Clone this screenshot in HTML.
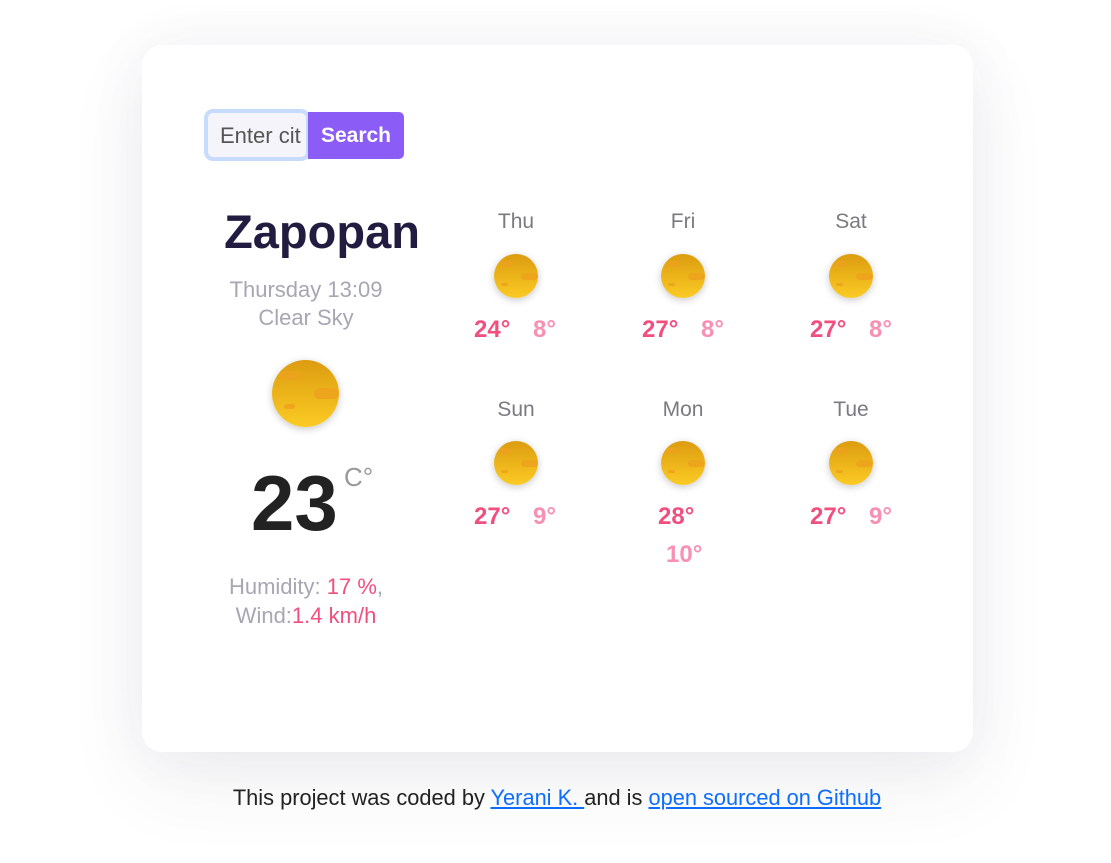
<!DOCTYPE html>
<html><head><meta charset="utf-8"><style>
*{margin:0;padding:0;box-sizing:border-box}
body{width:1111px;height:863px;background:#fff;font-family:"Liberation Sans",sans-serif;position:relative;overflow:hidden}
.card{position:absolute;left:142px;top:45px;width:831px;height:707px;background:#fff;border-radius:20px;box-shadow:0 30px 80px rgba(60,60,90,0.08),0 0 60px rgba(60,60,90,0.05)}
.a{position:absolute;white-space:nowrap}
.c{transform:translateX(-50%)}
.sun{position:absolute;border-radius:50%;background:linear-gradient(180deg,#dc9c10,#fbcb24);box-shadow:0 2px 8px rgba(0,0,0,0.22);overflow:hidden}
.sun i{position:absolute;background:#eda21d;border-radius:6px;opacity:.85}
.day{font-size:21px;color:#7a7a80}
.hi{font-size:24px;font-weight:bold;color:#f04f7f}
.lo{font-size:24px;font-weight:bold;color:#f890b2}
a{color:#0d6efd}
</style></head><body>
<div class="card"></div>
<div class="a" style="left:204px;top:109px;width:106px;height:52px;border:4px solid #c7dcfc;border-radius:9px;background:#f5f4fb;font-size:22px;color:#555;padding:10px 0 0 12px;overflow:hidden">Enter cit</div>
<div class="a" style="left:308px;top:112px;width:96px;height:47px;background:#8b5cf6;border-radius:0 5px 5px 0;color:#fff;font-weight:bold;font-size:21px;text-align:center;line-height:47px">Search</div>

<div class="a c" style="left:322px;top:204px;font-size:47px;font-weight:bold;color:#221d40">Zapopan</div>
<div class="a c" style="left:306px;top:276px;font-size:22px;color:#a8a6b3;text-align:center;line-height:28px">Thursday 13:09<br>Clear Sky</div>
<div class="sun" style="left:272px;top:360px;width:67px;height:67px"><i style="left:8px;top:11px;width:22px;height:9px"></i><i style="left:42px;top:28px;width:25px;height:11px"></i><i style="left:12px;top:44px;width:11px;height:5px"></i></div>
<div class="a" style="left:251px;top:458px;font-size:78px;font-weight:bold;color:#222">23</div>
<div class="a" style="left:344px;top:462px;font-size:26px;color:#999">C°</div>
<div class="a c" style="left:306px;top:572px;font-size:22px;color:#a8a6b3;text-align:center;line-height:29px">Humidity: <span style="color:#f04f7f">17 %</span>,<br>Wind:<span style="color:#f04f7f">1.4 km/h</span></div>

<div class="a c day" style="left:516px;top:210px">Thu</div>
<div class="a c day" style="left:683px;top:210px">Fri</div>
<div class="a c day" style="left:851px;top:210px">Sat</div>
<div class="a c day" style="left:516px;top:398px">Sun</div>
<div class="a c day" style="left:683px;top:398px">Mon</div>
<div class="a c day" style="left:851px;top:398px">Tue</div>

<div class="sun" style="left:494px;top:254px;width:44px;height:44px"><i style="left:5px;top:7px;width:13px;height:6px"></i><i style="left:27px;top:19px;width:17px;height:7px"></i><i style="left:7px;top:29px;width:7px;height:3px"></i></div>
<div class="sun" style="left:661px;top:254px;width:44px;height:44px"><i style="left:5px;top:7px;width:13px;height:6px"></i><i style="left:27px;top:19px;width:17px;height:7px"></i><i style="left:7px;top:29px;width:7px;height:3px"></i></div>
<div class="sun" style="left:829px;top:254px;width:44px;height:44px"><i style="left:5px;top:7px;width:13px;height:6px"></i><i style="left:27px;top:19px;width:17px;height:7px"></i><i style="left:7px;top:29px;width:7px;height:3px"></i></div>
<div class="sun" style="left:494px;top:441px;width:44px;height:44px"><i style="left:5px;top:7px;width:13px;height:6px"></i><i style="left:27px;top:19px;width:17px;height:7px"></i><i style="left:7px;top:29px;width:7px;height:3px"></i></div>
<div class="sun" style="left:661px;top:441px;width:44px;height:44px"><i style="left:5px;top:7px;width:13px;height:6px"></i><i style="left:27px;top:19px;width:17px;height:7px"></i><i style="left:7px;top:29px;width:7px;height:3px"></i></div>
<div class="sun" style="left:829px;top:441px;width:44px;height:44px"><i style="left:5px;top:7px;width:13px;height:6px"></i><i style="left:27px;top:19px;width:17px;height:7px"></i><i style="left:7px;top:29px;width:7px;height:3px"></i></div>

<div class="a hi" style="left:474px;top:316px">24°</div><div class="a lo" style="left:533px;top:316px">8°</div>
<div class="a hi" style="left:642px;top:316px">27°</div><div class="a lo" style="left:701px;top:316px">8°</div>
<div class="a hi" style="left:810px;top:316px">27°</div><div class="a lo" style="left:869px;top:316px">8°</div>
<div class="a hi" style="left:474px;top:503px">27°</div><div class="a lo" style="left:533px;top:503px">9°</div>
<div class="a hi" style="left:658px;top:503px">28°</div><div class="a lo" style="left:666px;top:541px">10°</div>
<div class="a hi" style="left:810px;top:503px">27°</div><div class="a lo" style="left:869px;top:503px">9°</div>

<div class="a c" style="left:557px;top:785px;font-size:21.8px;color:#222">This project was coded by <a href="#">Yerani K. </a>and is <a href="#">open sourced on Github</a></div>
</body></html>
